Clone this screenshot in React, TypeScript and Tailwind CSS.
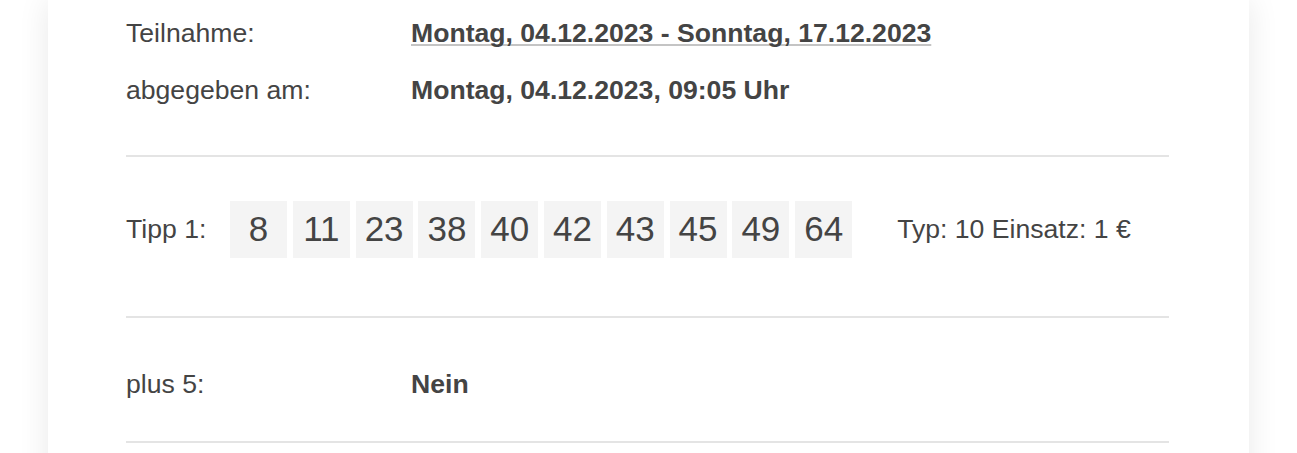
import React from "react";

const nums = [8, 11, 23, 38, 40, 42, 43, 45, 49, 64];

export default function App() {
  return (
    <div className="w-[1297px] h-[453px] overflow-hidden bg-white font-['Liberation_Sans',Arial,sans-serif] text-[#444]">
      <div className="ml-[48px] w-[1201px] h-[520px] bg-white shadow-[0_0_30px_rgba(0,0,0,0.09)] pl-[78px] pr-[80px]">
        <div className="pt-[5px] pb-[36px] text-[26.6px]">
          <div className="flex h-[57px] items-center">
            <div className="w-[285px]">Teilnahme:</div>
            <div className="font-bold underline decoration-[#c4c4c4] decoration-2 underline-offset-[2px] [text-decoration-skip-ink:none]">
              Montag, 04.12.2023 - Sonntag, 17.12.2023
            </div>
          </div>
          <div className="flex h-[57px] items-center">
            <div className="w-[285px]">abgegeben am:</div>
            <div className="font-bold">Montag, 04.12.2023, 09:05 Uhr</div>
          </div>
        </div>
        <div className="h-[2px] bg-[#e4e4e4]" />
        <div className="pt-[44px] pb-[58px] flex items-center text-[26.6px]">
          <div className="w-[104px]">Tipp 1:</div>
          <div className="flex gap-[5.8px]">
            {nums.map((n) => (
              <div
                key={n}
                className="w-[57px] h-[57px] bg-[#f4f4f4] flex items-center justify-center text-[35px]"
              >
                {n}
              </div>
            ))}
          </div>
          <div className="ml-[45px]">Typ: 10 Einsatz: 1 €</div>
        </div>
        <div className="h-[2px] bg-[#e4e4e4]" />
        <div className="pt-[38px] pb-[28px] text-[26.6px]">
          <div className="flex h-[57px] items-center">
            <div className="w-[285px]">plus 5:</div>
            <div className="font-bold">Nein</div>
          </div>
        </div>
        <div className="h-[2px] bg-[#e4e4e4]" />
      </div>
    </div>
  );
}
